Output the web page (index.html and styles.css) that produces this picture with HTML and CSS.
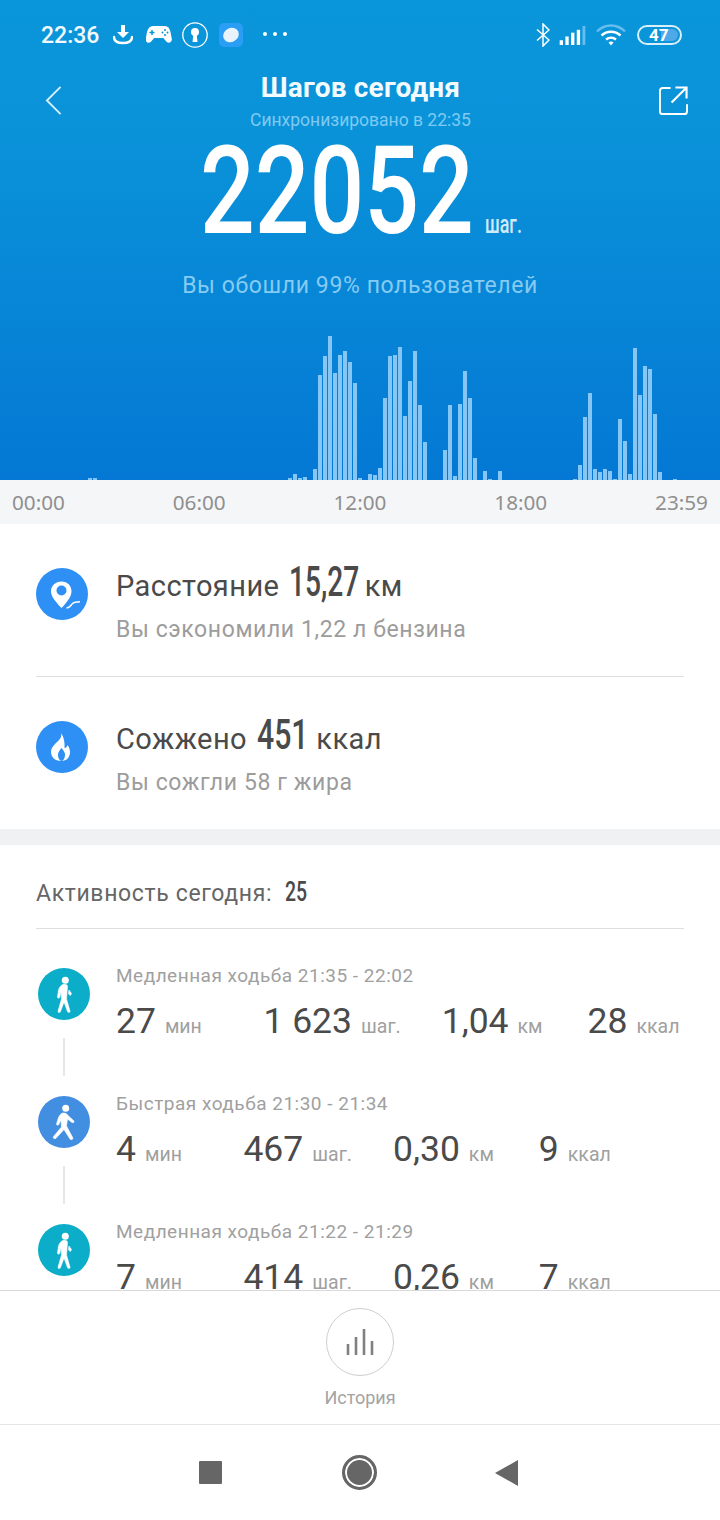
FILE: index.html
```html
<!DOCTYPE html>
<html lang="ru">
<head>
    <meta charset="UTF-8">
    <meta name="viewport" content="width=device-width, initial-scale=1.0">
    <title>Шагов сегодня</title>
    <link rel="stylesheet" href="styles.css">
</head>
<body>
    <div class="page">
        <div class="hero">
            <div class="status-bar">
                <span class="clock">22:36</span>
                <svg class="ic-download" viewBox="0 0 20 20"><path d="M8 0h4v7h4l-6 6-6-6h4z" fill="#fff"/><path d="M1 12c0 4 3 6 9 6s9-2 9-6" fill="none" stroke="#fff" stroke-width="2.4" stroke-linecap="round"/></svg>
                <svg class="ic-game" viewBox="0 0 26 20"><path d="M7 1h12c3 0 4.500 2 5.500 6l1.300 7c.4 3-2.800 5-5 3l-3.500-4H8.200l-3.500 4c-2.200 2-5.400 0-5-3l1.300-7C2 3 4 1 7 1z" fill="#fff"/><path d="M6 5v5M3.500 7.500h5" stroke="#0994d9" stroke-width="1.500"/><circle cx="19" cy="5" r="1" fill="#0994d9"/><circle cx="19" cy="10" r="1" fill="#0994d9"/><circle cx="16.500" cy="7.500" r="1" fill="#0994d9"/><circle cx="21.500" cy="7.500" r="1" fill="#0994d9"/></svg>
                <svg class="ic-key" viewBox="0 0 26 26"><circle cx="13" cy="13" r="12.200" fill="none" stroke="#fff" stroke-width="1.300"/><circle cx="13" cy="10" r="4" fill="#fff"/><path d="M11.500 11h3l1 9h-5z" fill="#fff"/></svg>
                <svg class="ic-app" viewBox="0 0 24 24"><rect width="24" height="24" rx="5" fill="#2a9df4"/><ellipse cx="12" cy="12" rx="8" ry="7" transform="rotate(-25 12 12)" fill="#e8f3fc"/></svg>
                <svg class="ic-dots" viewBox="0 0 24 4"><circle cx="2" cy="2" r="2" fill="#fff"/><circle cx="12" cy="2" r="2" fill="#fff"/><circle cx="22" cy="2" r="2" fill="#fff"/></svg>
                <span class="spacer"></span>
                <svg class="ic-bt" viewBox="0 0 14 24"><path d="M1 6.500l12 10.500-6 6V1l6 6L1 17.500" fill="none" stroke="#fff" stroke-width="1.500"/></svg>
                <svg class="ic-signal" viewBox="0 0 27 20"><rect x="0" y="15" width="3.500" height="5" fill="#fff"/><rect x="6" y="11" width="3.500" height="9" fill="#fff"/><rect x="12" y="7" width="3.500" height="13" fill="#fff"/><rect x="18" y="4" width="3.500" height="16" fill="#fff"/><rect x="24" y="0" width="3" height="20" fill="#66bdf0"/></svg>
                <svg class="ic-wifi" viewBox="0 0 30 22"><path d="M1 7.500c8-8 20-8 28 0" fill="none" stroke="#66bdf0" stroke-width="2.400"/><path d="M5.500 11.500c5.500-5 13.500-5 19 0M10 15.500c3-2.500 7-2.500 10 0" fill="none" stroke="#fff" stroke-width="2.400"/><path d="M12.500 18.500c1.500-1.200 3.500-1.200 5 0L15 21.500z" fill="#fff"/></svg>
                <div class="battery"><span class="battery-fill"></span><span class="battery-num">47</span></div>
            </div>

            <div class="nav">
                <svg class="ic-back" viewBox="0 0 18 32"><path d="M16.500 1.500L2 16l14.500 14.500" fill="none" stroke="#d6effb" stroke-width="2"/></svg>
                <div class="nav-title">
                    <div class="nav-head">Шагов сегодня</div>
                    <div class="nav-sub">Синхронизировано в 22:35</div>
                </div>
                <svg class="ic-share" viewBox="0 0 30 30"><path d="M12 2H4a3 3 0 0 0-3 3v21a3 3 0 0 0 3 3h22a3 3 0 0 0 3-3v-7" fill="none" stroke="#fff" stroke-width="2"/><path d="M13 17L28 2M17 1.500h11.500V13" fill="none" stroke="#fff" stroke-width="2.200"/></svg>
            </div>

            <div class="count">
                <span class="count-num">22052</span>
                <span class="count-unit">шаг.</span>
            </div>
            <div class="beat">Вы обошли 99% пользователей</div>
            <div class="chart" id="chart"></div>
        </div>

        <div class="axis">
            <span>00:00</span><span>06:00</span><span>12:00</span><span>18:00</span><span>23:59</span>
        </div>

        <div class="stats">
            <div class="stat">
                <svg class="stat-icon" viewBox="0 0 52 52"><circle cx="26" cy="26" r="26" fill="#2e8ff5"/><path d="M25.500 13.500c-6 0-10.500 4.300-10.500 9.700 0 6 6 11.800 10.500 16.800 4.500-5 10-10.800 10-16.800 0-5.400-4-9.700-10-9.700z" fill="#fff"/><circle cx="25.500" cy="22.500" r="5" fill="#2e8ff5"/><path d="M30.500 40c3.500 0 4-2.500 6-4.500 1.800-1.500 4-1.800 7.500-1.800" fill="none" stroke="#fff" stroke-width="1.500"/></svg>
                <div class="stat-text">
                    <div class="stat-main">Расстояние <span class="narrow narrow-dist">15,27</span> км</div>
                    <div class="stat-sub">Вы сэкономили 1,22 л бензина</div>
                </div>
            </div>
            <div class="stat stat-last">
                <svg class="stat-icon" viewBox="0 0 52 52"><circle cx="26" cy="26" r="26" fill="#2e8ff5"/><path d="M25 12c1.500 5-3 8-6 11-2.500 2.500-4 5-4 8 0 5 4 9 10 9s9-4 9-9c0-3-1-5-2.500-7-.5 2-1.500 3-3 3 .5-5-.5-11-3.500-15z" fill="#fff"/><path d="M25.500 27c-2 2.500-3.500 4.500-3.500 6.500 0 3 1.500 6.500 3.500 6.500s3.500-3.500 3.500-6.500c0-2-1.500-4-3.500-6.500z" fill="#2e8ff5"/></svg>
                <div class="stat-text">
                    <div class="stat-main">Сожжено <span class="narrow narrow-cal">451</span> ккал</div>
                    <div class="stat-sub">Вы сожгли 58 г жира</div>
                </div>
            </div>
        </div>

        <div class="band"></div>

        <div class="activity">
            <div class="activity-head">Активность сегодня: <span class="narrow narrow-count">25</span></div>

            <div class="item">
                <div class="item-side">
                    <svg class="walk" viewBox="0 0 52 52"><circle cx="26" cy="26" r="26" fill="#0badc9"/><circle cx="27.300" cy="12.300" r="3.500" fill="#fff"/><path d="M25 16.500C23 17 21.500 19 20.500 22L19.500 29c0 1.500 2 1.500 2.300 0L23 23.500l.5 7.500L20 43c-.2 2 2 2 2.500.5L26 34l3.500 9.500c.5 1.500 3 1 2.500-.5L28.500 31l1-12.500C29.500 17 28 16 25 16.500zM31 22l2.500 3.500-1 2-2-1.500z" fill="#fff" stroke="#fff" stroke-width=".6"/></svg>
                    <span class="link"></span>
                </div>
                <div class="item-body">
                    <div class="item-title">Медленная ходьба 21:35 - 22:02</div>
                    <div class="item-vals">
                        <span class="val"><b>27</b>мин</span>
                        <span class="val"><b>1 623</b>шаг.</span>
                        <span class="val"><b>1,04</b>км</span>
                        <span class="val"><b>28</b>ккал</span>
                    </div>
                </div>
            </div>

            <div class="item">
                <div class="item-side">
                    <svg class="walk" viewBox="0 0 52 52"><circle cx="26" cy="26" r="26" fill="#428ee0"/><circle cx="27.700" cy="12.300" r="3.500" fill="#fff"/><path d="M25 17c-2 0-4 3-5 6l-1.500 5c0 1.500 2 1.500 2.300.5L23 24l.5 7-8 9.500c-1 1.500 1 3 2.500 1.800l8-8.800 6 9.500c1 1.500 3.500.3 2.800-1.300L28.500 30l1-7 4.500 3.500c1.500 1 2.800-.8 1.500-2L30 19.500C29 17.500 27 17 25 17z" fill="#fff" stroke="#fff" stroke-width=".6"/></svg>
                    <span class="link"></span>
                </div>
                <div class="item-body">
                    <div class="item-title">Быстрая ходьба 21:30 - 21:34</div>
                    <div class="item-vals">
                        <span class="val"><b>4</b>мин</span>
                        <span class="val"><b>467</b>шаг.</span>
                        <span class="val"><b>0,30</b>км</span>
                        <span class="val"><b>9</b>ккал</span>
                    </div>
                </div>
            </div>

            <div class="item">
                <div class="item-side">
                    <svg class="walk" viewBox="0 0 52 52"><circle cx="26" cy="26" r="26" fill="#0badc9"/><circle cx="27.300" cy="12.300" r="3.500" fill="#fff"/><path d="M25 16.500C23 17 21.500 19 20.500 22L19.500 29c0 1.500 2 1.500 2.300 0L23 23.500l.5 7.500L20 43c-.2 2 2 2 2.500.5L26 34l3.500 9.500c.5 1.500 3 1 2.500-.5L28.500 31l1-12.500C29.500 17 28 16 25 16.500zM31 22l2.500 3.500-1 2-2-1.500z" fill="#fff" stroke="#fff" stroke-width=".6"/></svg>
                </div>
                <div class="item-body">
                    <div class="item-title">Медленная ходьба 21:22 - 21:29</div>
                    <div class="item-vals">
                        <span class="val"><b>7</b>мин</span>
                        <span class="val"><b>414</b>шаг.</span>
                        <span class="val"><b>0,26</b>км</span>
                        <span class="val"><b>7</b>ккал</span>
                    </div>
                </div>
            </div>
        </div>

        <div class="history">
            <div class="history-btn">
                <svg class="ic-bars" viewBox="0 0 28 26"><path d="M2 15v11M10 8v18M18 0v26M26 12v14" fill="none" stroke="#808080" stroke-width="2.600"/></svg>
            </div>
            <div class="history-label">История</div>
        </div>

        <div class="navbar">
            <span class="nav-square"></span>
            <span class="nav-circle"></span>
            <svg class="nav-tri" viewBox="0 0 23 26"><path d="M23 0v26L0 13z" fill="#666"/></svg>
        </div>
    </div>

    <script>
        // ten minute step counts, start index -> run of bars
        const runs = {
            17: [2, 2],
            57: [2, 6, 2, 3, 0, 11, 105, 124, 144, 107, 125, 129, 118, 97, 2, 0, 6, 5, 12, 82, 124, 125, 133, 64, 99, 129, 75, 38, 0, 0, 0, 30, 75, 4, 76, 109, 82, 22, 0, 9, 1, 0, 9],
            114: [1, 15, 63, 87, 11, 8, 11, 9, 1, 61, 39, 6, 132, 85, 114, 111, 66, 8, 0, 0, 1]
        };
        const chart = document.getElementById('chart');
        const heights = new Array(144).fill(0);
        Object.keys(runs).forEach(start => {
            runs[start].forEach((h, i) => { heights[Number(start) + i] = h; });
        });
        heights.forEach(h => {
            const bar = document.createElement('span');
            bar.className = 'bar';
            bar.style.height = h + 'px';
            chart.appendChild(bar);
        });
    </script>
</body>
</html>
```

FILE: styles.css
```css
* {
    box-sizing: border-box;
}
html, body {
    margin: 0;
    padding: 0;
}
body {
    font-family: 'Roboto', 'Noto Sans', sans-serif;
    background-color: #ffffff;
    color: #444;
}
svg {
    display: block;
    flex: none;
}
.page {
    width: 720px;
    height: 1520px;
    display: flex;
    flex-direction: column;
    overflow: hidden;
}
/* squeezed digits, the box width is the width after scaling */
.narrow {
    display: inline-block;
    font-weight: 500;
    color: #4a4a4a;
    letter-spacing: 0;
    transform-origin: left center;
    white-space: nowrap;
}

/* hero */
.hero {
    height: 480px;
    flex: none;
    display: flex;
    flex-direction: column;
    background: linear-gradient(180deg, #0a96da 0%, #0a92d9 30%, #0478d4 100%);
    color: #fff;
}
.status-bar {
    height: 70px;
    flex: none;
    display: flex;
    align-items: center;
    padding: 0 38px 0 41px;
}
.clock {
    font-size: 23px;
    font-weight: 500;
    color: #f2fafe;
    width: 58px;
}
.ic-download { width: 20px; height: 20px; margin-left: 14px; }
.ic-game { width: 26px; height: 20px; margin-left: 13px; }
.ic-key { width: 26px; height: 26px; margin-left: 10px; }
.ic-app { width: 24px; height: 24px; margin-left: 11px; }
.ic-dots { width: 24px; height: 4px; margin-left: 20px; margin-top: -2px; }
.spacer { flex: 1; }
.ic-bt { width: 14px; height: 24px; }
.ic-signal { width: 27px; height: 19px; margin-left: 9px; }
.ic-wifi { width: 30px; height: 22px; margin-left: 10px; }
.battery {
    position: relative;
    width: 45px;
    height: 20px;
    margin-left: 11px;
    border: 2px solid #d9f0fb;
    border-radius: 10px;
    overflow: hidden;
}
.battery-fill {
    position: absolute;
    right: 2px;
    top: 2px;
    bottom: 2px;
    width: 17px;
    border-radius: 0 7px 7px 0;
    background-color: #4fa9e8;
}
.battery-num {
    position: relative;
    display: block;
    margin-left: 10px;
    font-size: 17px;
    line-height: 16px;
    font-weight: 700;
    color: #fff;
}
.nav {
    height: 75px;
    flex: none;
    display: flex;
    align-items: flex-start;
    padding: 14px 32px 0 45px;
}
.ic-back { width: 17px; height: 31px; margin-top: 1px; }
.ic-share { width: 29px; height: 29px; margin-top: 2px; }
.nav-title {
    flex: 1;
    text-align: center;
    margin-top: -14px;
}
.nav-head {
    font-size: 28px;
    line-height: 36px;
    font-weight: 700;
    letter-spacing: 0.2px;
    color: #f4fbfe;
}
.nav-sub {
    font-size: 17.500px;
    line-height: 28px;
    color: #7fcaf2;
}
.count {
    height: 90px;
    flex: none;
    display: flex;
    justify-content: center;
    align-items: baseline;
}
.count-num {
    width: 276px;
    font-size: 122px;
    font-weight: 500;
    line-height: 93px;
    transform: scaleX(0.79);
    transform-origin: left center;
    white-space: nowrap;
}
.count-unit {
    width: 35px;
    margin-left: 9px;
    font-size: 26px;
    font-weight: 500;
    color: #cfeafa;
    transform: scaleX(0.69);
    transform-origin: left center;
    white-space: nowrap;
}
.beat {
    margin-top: 36px;
    text-align: center;
    font-size: 23px;
    line-height: 30px;
    letter-spacing: 0.6px;
    color: #86cbf2;
}
.chart {
    margin-top: auto;
    height: 144px;
    flex: none;
    display: flex;
    align-items: flex-end;
    gap: 1px;
    padding-left: 3px;
}
.bar {
    width: 4px;
    flex: none;
    background-color: #85c6f5;
}

/* time axis */
.axis {
    height: 44px;
    flex: none;
    display: flex;
    justify-content: space-between;
    align-items: center;
    padding: 0 12px;
    background-color: #f5f6f8;
    font-family: 'Noto Sans', 'Roboto', sans-serif;
    font-size: 20.700px;
    color: #8f8f8f;
}

/* distance and calories */
.stats {
    flex: none;
    padding: 0 36px;
}
.stat {
    height: 153px;
    display: flex;
    align-items: flex-start;
    border-bottom: 1px solid #dddddd;
    padding-top: 44px;
}
.stat-last {
    height: 152px;
    border-bottom: none;
}
.stat-icon {
    width: 52px;
    height: 52px;
    margin-right: 28px;
}
.stat-text {
    margin-top: -6px;
}
.stat-main {
    font-size: 29px;
    line-height: 40px;
    color: #4a4a4a;
    letter-spacing: 0.45px;
    white-space: nowrap;
}
.stat-sub {
    font-size: 23px;
    line-height: 32px;
    margin-top: 8px;
    color: #9c9c9c;
    letter-spacing: 0.6px;
}
.narrow-dist {
    width: 68px;
    margin-left: 2px;
    font-size: 42px;
    line-height: 40px;
    transform: scaleX(0.67);
}
.narrow-cal {
    width: 52px;
    margin-left: 2px;
    font-size: 42px;
    line-height: 40px;
    transform: scaleX(0.72);
}
.narrow-count {
    width: 22px;
    font-size: 27px;
    line-height: 26px;
    transform: scaleX(0.72);
    margin-left: 6px;
}
.band {
    height: 16px;
    flex: none;
    background-color: #f0f1f3;
}

/* activity list */
.activity {
    flex: 1;
    min-height: 0;
    overflow: hidden;
    padding: 0 36px;
}
.activity-head {
    height: 84px;
    padding-top: 31px;
    border-bottom: 1px solid #dddddd;
    font-size: 23px;
    line-height: 36px;
    color: #666;
    letter-spacing: 0.65px;
}
.item {
    height: 128px;
    display: flex;
}
.item-side {
    width: 80px;
    flex: none;
    padding-top: 39px;
    padding-left: 2px;
}
.walk {
    width: 52px;
    height: 52px;
}
.link {
    display: block;
    width: 2px;
    height: 38px;
    margin: 18px 0 0 25px;
    background-color: #e6e6e6;
}
.item-body {
    padding-top: 34px;
}
.item-title {
    font-size: 19px;
    line-height: 26px;
    color: #a0a0a0;
    letter-spacing: 0.5px;
}
.item-vals {
    display: flex;
    margin-top: 10px;
    height: 44px;
    align-items: baseline;
}
.val {
    font-size: 19.500px;
    color: #a0a0a0;
    white-space: nowrap;
}
.val b {
    font-size: 35.500px;
    line-height: 44px;
    font-weight: 400;
    color: #4a4a4a;
    margin-right: 9px;
}
.val:nth-child(1) { margin-right: 61.500px; }
.val:nth-child(2) { margin-right: 41px; }
.val:nth-child(3) { margin-right: 45px; }

/* bottom */
.history {
    height: 135px;
    flex: none;
    border-top: 1px solid #d9d9d9;
    border-bottom: 1px solid #e6e6e6;
    display: flex;
    flex-direction: column;
    align-items: center;
    padding-top: 17px;
}
.history-btn {
    width: 68px;
    height: 68px;
    border: 1px solid #cfcfcf;
    border-radius: 50%;
    display: flex;
    align-items: center;
    justify-content: center;
}
.ic-bars { width: 28px; height: 26px; }
.history-label {
    margin-top: 10px;
    font-size: 18px;
    line-height: 24px;
    color: #a3a3a3;
}
.navbar {
    height: 95px;
    flex: none;
    display: flex;
    align-items: center;
    padding-left: 199px;
}
.nav-square {
    width: 23px;
    height: 23px;
    border-radius: 1px;
    background-color: #666;
}
.nav-circle {
    width: 35px;
    height: 35px;
    margin-left: 120px;
    border: 3px solid #666;
    border-radius: 50%;
    box-shadow: inset 0 0 0 2px #fff;
    background-color: #666;
}
.nav-tri {
    width: 23px;
    height: 26px;
    margin-left: 118px;
}
```
